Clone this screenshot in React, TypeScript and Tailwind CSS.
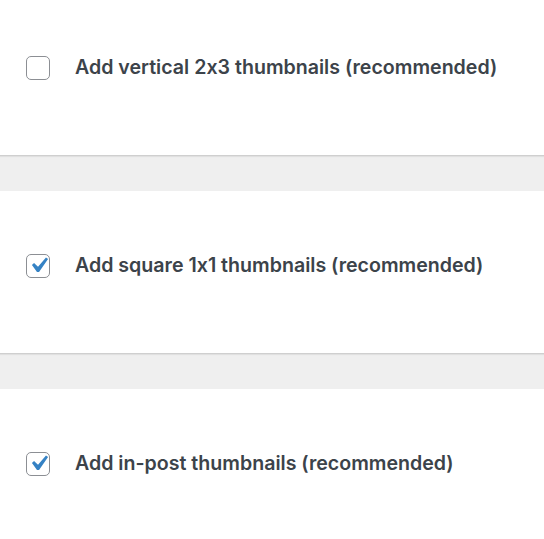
const items = [
  { label: "Add vertical 2x3 thumbnails (recommended)", checked: false },
  { label: "Add square 1x1 thumbnails (recommended)", checked: true },
  { label: "Add in-post thumbnails (recommended)", checked: true },
];

function Checkbox({ checked }: { checked: boolean }) {
  return (
    <span className="flex h-6 w-6 shrink-0 items-center justify-center rounded-[5px] border border-[#8c8f94] bg-white">
      {checked && (
        <svg viewBox="0 0 20 20" className="h-[31px] w-[31px] shrink-0" fill="#3582c4">
          <path d="M14.83 4.89l1.34.94-5.81 8.38H9.02L5.78 9.67l1.34-1.25 2.57 2.4z" />
        </svg>
      )}
    </span>
  );
}

export default function App() {
  return (
    <div className="min-h-screen overflow-hidden bg-[#efefef] font-['Inter',sans-serif] [font-feature-settings:'calt'_0]">
      {items.map((item, i) => (
        <div
          key={i}
          className={`h-[163px] border-b border-[#cfcfcf] bg-white px-[26px] pt-[60px] shadow-[0_1px_1px_rgba(0,0,0,0.06)] ${
            i === 0 ? "-mt-[7px]" : "mt-[35px]"
          }`}
        >
          <label className="flex items-center gap-[25px]">
            <Checkbox checked={item.checked} />
            <span className="text-[19.6px] font-semibold text-[#3c434a]">
              {item.label}
            </span>
          </label>
        </div>
      ))}
    </div>
  );
}
